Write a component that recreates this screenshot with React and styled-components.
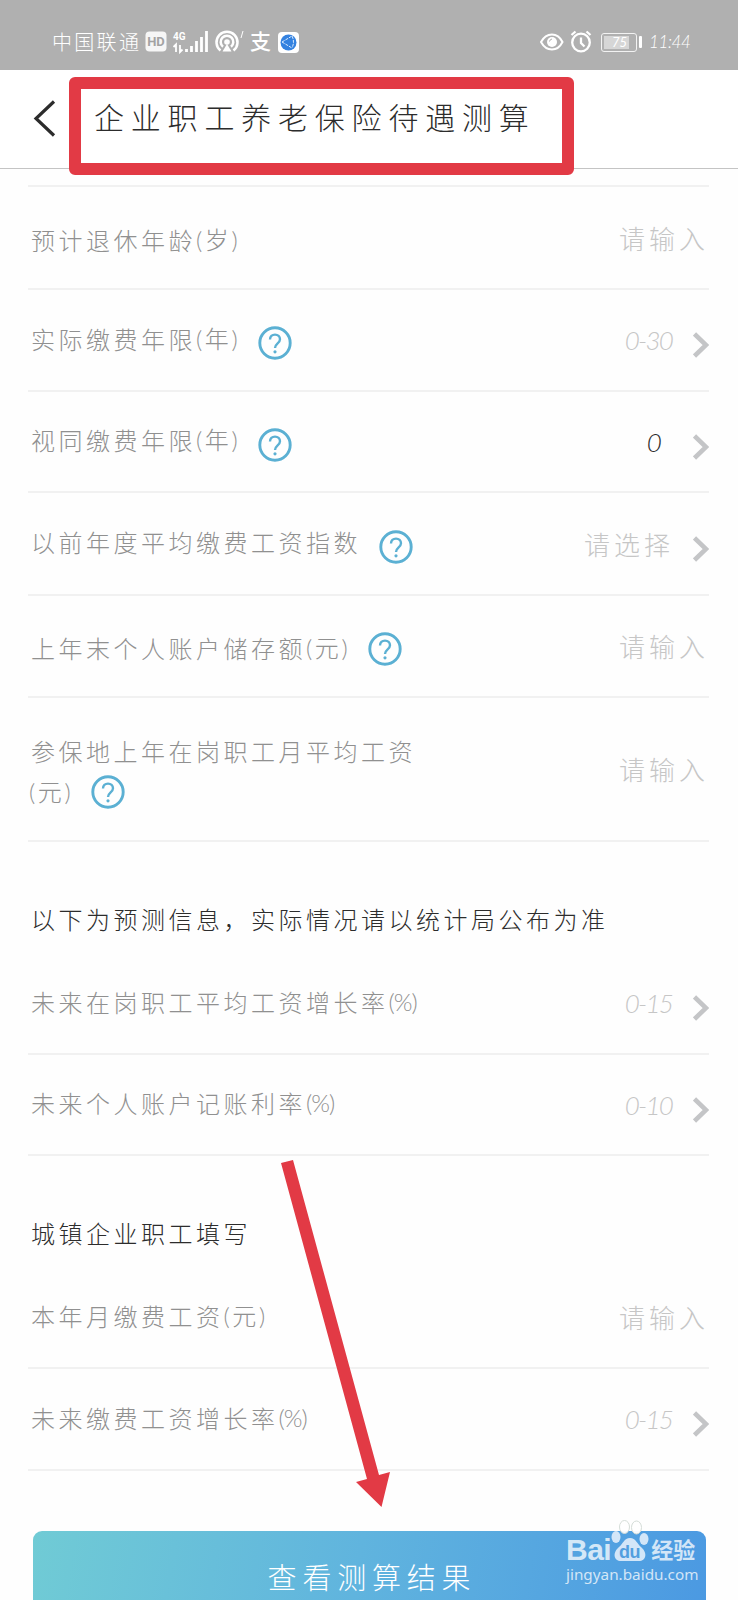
import React from 'react'
import styled, { createGlobalStyle } from 'styled-components'

const GlobalStyle = createGlobalStyle`
  * { box-sizing: border-box; }
  body {
    margin: 0;
    background: #fdfdfd;
    font-family: "Noto Sans CJK SC", "Noto Sans", sans-serif;
    font-weight: 300;
  }
`

const Screen = styled.div`
position: relative;
width: 738px;
height: 1600px;
overflow: hidden;
background: #fefefe;`

const StatusBar = styled.div`
display: flex;
align-items: center;
height: 70px;
padding: 14px 48px 0 52px;
background: #b0b0b0;
color: #fff;`

const Carrier = styled.span`
width: 93px;
font-size: 20px;
letter-spacing: 2.3px;
line-height: 28px;
white-space: nowrap;`

const StatusIcons = styled.svg`
display: block;
flex: none;`

const Pay = styled.span`
width: 22px;
height: 30px;
margin: 0 6px 0 5px;
font-size: 21px;
font-weight: 500;
line-height: 26px;`

const Spacer = styled.div`
flex: 1;`

const Battery = styled.div`
position: relative;
width: 36px;
height: 19px;
margin: 0 12px 0 9px;
padding: 2px;
border: 1.5px solid #f2f2f2;
border-radius: 3px;
&::after {
  content: '';
  position: absolute;
  right: -6px;
  top: 2px;
  width: 3px;
  height: 12px;
  border-radius: 1px;
  background: #fff;
}`

const Charge = styled.div`
width: 25px;
height: 100%;
padding-left: 8px;
background: #d6d6d6;
font: italic 13px/13px Lato, sans-serif;`

const Clock = styled.span`
width: 41px;
font: italic 300 17px/24px Lato, sans-serif;
letter-spacing: -0.4px;
white-space: nowrap;`

const Header = styled.header`
position: relative;
display: flex;
height: 99px;
padding-left: 33px;
border-bottom: 1px solid #c4c4c4;
background: #fff;`

const BackIcon = styled.svg`
display: block;
margin-top: 30px;`

const Title = styled.h1`
margin: 24px 0 0 37px;
color: #2c2c2c;
font-size: 30px;
font-weight: 300;
line-height: 44px;
letter-spacing: 6.8px;
white-space: nowrap;`

// Red marker frame drawn over the title
const Highlight = styled.div`
position: absolute;
left: 69px;
top: 7px;
width: 505px;
height: 98px;
border: 12px solid #e23a45;
border-radius: 6px;`

const Form = styled.main`
margin: 16px 29px 0 28px;
border-top: 2px solid #f1f1f1;`

const Row = styled.div`
display: flex;
align-items: center;
height: ${p => p.$height}px;
border-bottom: 2px solid #f1f1f1;`

const Label = styled.div`
display: flex;
flex-wrap: wrap;
align-items: center;
width: 420px;
padding: ${p => (p.$low ? '3px 0 0 3px' : '0 0 4px 3px')};
color: #909090;
font-size: 24px;
line-height: 41px;
letter-spacing: 3.5px;
white-space: nowrap;`

const LabelText = styled.span`
margin-right: ${p => (p.$wrap ? 40 : 0)}px;`

const Unit = styled.span`
margin-left: ${p => (p.$wrap ? -2 : 0)}px;
font-family: Lato, "Noto Sans CJK SC", sans-serif;
letter-spacing: ${p => (p.$tight ? -1 : 2.6)}px;`

const HelpIcon = styled.svg`
display: block;
position: relative;
top: ${p => (p.$low ? 1 : 5)}px;
margin-left: 18px;`

const Value = styled.div`
flex: 1;
padding-right: ${p => (p.$plain ? 0 : 34)}px;
margin-right: ${p => (p.$plain ? 0 : -15)}px;
color: ${p => (p.$filled ? '#2c2c2c' : '#c6c6c6')};
font-size: 26px;
line-height: 36px;
letter-spacing: 4px;
text-align: right;
white-space: nowrap;`

const NumberValue = styled(Value)`
padding-right: ${p => (p.$filled ? 48 : 36)}px;
font: italic 300 26px/36px Lato, sans-serif;
letter-spacing: -1.8px;`

const Chevron = styled.svg`
display: block;
position: relative;
top: 5px;`

const SectionTitle = styled.h2`
height: ${p => p.$height}px;
margin: 0;
padding: ${p => p.$top}px 0 0 3px;
color: #2c2c2c;
font-size: 24px;
font-weight: 300;
line-height: 36px;
letter-spacing: 3.5px;
white-space: nowrap;`

const Submit = styled.button`
display: block;
width: 673px;
height: 96px;
margin: 60px 0 0 32.5px;
padding: 0 0 5px 6px;
border: 0;
border-radius: 9px;
background: linear-gradient(100deg, #70cbd5 0%, #60b4de 48%, #4b99e2 100%);
color: #fff;
font: 300 29px/1 "Noto Sans CJK SC", sans-serif;
letter-spacing: 5.8px;
text-align: center;`

const Arrow = styled.svg`
position: absolute;
left: 270px;
top: 1150px;`

const Watermark = styled.div`
position: absolute;
left: 566px;
top: 1519px;
width: 140px;
color: rgba(255, 255, 255, 0.75);
white-space: nowrap;`

const Brand = styled.div`
display: flex;
align-items: flex-end;
height: 46px;
font: 700 30px/30px "Liberation Sans", sans-serif;
letter-spacing: -0.5px;`

const Paw = styled.svg`
display: block;
align-self: flex-start;`

const BrandCn = styled.span`
margin: 0 0 2px 2px;
font: 700 22px/30px "Noto Sans CJK SC", sans-serif;
letter-spacing: 0;`

const Site = styled.div`
font: 400 15.3px/19px "Noto Sans", sans-serif;`

const Help = ({ low }) => (
  <HelpIcon $low={low} width="34" height="34" viewBox="0 0 34 34" fill="none">
    <circle cx="17" cy="17" r="15.2" stroke="#5bb0d3" strokeWidth="2.9" />
    <path d="M12 13.6c0-3 2.1-5 5-5s5 2 5 4.7c0 2.1-1.2 3.2-2.6 4.4-1.5 1.3-2.4 2.2-2.4 4.4" stroke="#5bb0d3" strokeWidth="2.4" />
    <circle cx="17" cy="25.8" r="1.6" fill="#5bb0d3" />
  </HelpIcon>
)

const Next = () => (
  <Chevron width="16" height="26" viewBox="0 0 16 26" fill="none">
    <path d="M1.5 2L13 13 1.5 24" stroke="#c4c5c7" strokeWidth="4.6" />
  </Chevron>
)

const basics = [
  { label: '预计退休年龄', unit: '(岁)', low: true, value: '请输入', height: 103 },
  { label: '实际缴费年限', unit: '(年)', help: true, value: '0-30', number: true, next: true, height: 102 },
  { label: '视同缴费年限', unit: '(年)', help: true, value: '0', number: true, filled: true, next: true, height: 101 },
  { label: '以前年度平均缴费工资指数', help: true, value: '请选择', next: true, height: 103 },
  { label: '上年末个人账户储存额', unit: '(元)', low: true, help: true, value: '请输入', height: 102 },
  { label: '参保地上年在岗职工月平均工资', unit: '(元)', wrap: true, low: true, help: true, value: '请输入', height: 144 },
]

const forecast = [
  { label: '未来在岗职工平均工资增长率', unit: '(%)', value: '0-15', number: true, next: true, height: 102 },
  { label: '未来个人账户记账利率', unit: '(%)', value: '0-10', number: true, next: true, height: 101 },
]

const company = [
  { label: '本年月缴费工资', unit: '(元)', value: '请输入', height: 102 },
  { label: '未来缴费工资增长率', unit: '(%)', value: '0-15', number: true, next: true, height: 102 },
]

const Field = ({ label, unit, wrap, low, help, value, number, filled, next, height }) => {
  const ValueText = number ? NumberValue : Value
  return (
    <Row $height={height}>
      <Label $low={low}>
        <LabelText $wrap={wrap}>{label}</LabelText>
        {unit && <Unit $wrap={wrap} $tight={unit === '(%)'}>{unit}</Unit>}
        {help && <Help low={low} />}
      </Label>
      <ValueText $plain={!next} $filled={filled}>{value}</ValueText>
      {next && <Next />}
    </Row>
  )
}

const renderFields = fields => fields.map(f => <Field key={f.label} {...f} />)

export default function App() {
  return (
    <Screen>
      <GlobalStyle />
      <StatusBar>
        <Carrier>中国联通</Carrier>
        <StatusIcons width="100" height="24" viewBox="0 0 100 24" fill="none">
          <rect x="0.5" y="1.5" width="21" height="20" rx="4" fill="#f6f6f6" />
          <text x="11" y="16.2" fill="#a3a3a3" textAnchor="middle" fontFamily="Roboto" fontWeight="700" fontSize="13">HD</text>
          <text x="28" y="9.5" fill="#fff" fontFamily="Roboto" fontWeight="700" fontSize="10">4G</text>
          <path d="M28.5 17l2.5-2.5v7.5M35 15v7l2.5-2.500" stroke="#fff" strokeWidth="1.8" />
          <path d="M41.500 19v3M46.500 16v6M51.500 11v11M56.500 7v15M61.500 1v21" stroke="#fff" strokeWidth="2.8" />
          <path d="M75.500 20.500a10.500 10.500 0 1 1 13 0M78 16.800a6.300 6.300 0 1 1 8 0" stroke="#fff" strokeWidth="2.5" />
          <path d="M82 14l4.500 7.500h-9z" fill="#fff" />
          <circle cx="82" cy="12" r="2.8" fill="#fff" />
          <path d="M98 1l-2 7" stroke="#fff" />
        </StatusIcons>
        <Pay>支</Pay>
        <StatusIcons width="21" height="21" viewBox="0 0 21 21" fill="none">
          <rect width="21" height="21" rx="4" fill="#fff" />
          <circle cx="10.5" cy="10.5" r="8" fill="#3482e0" />
          <path d="M4 10L14 4M4 10l10 6M14 4c2 4 2 8 0 12" stroke="#d9ebff" strokeWidth="1" strokeDasharray="3 1" />
        </StatusIcons>
        <Spacer />
        <StatusIcons width="52" height="24" viewBox="0 0 52 24" fill="none">
          <path d="M1 12c5.500-10 16.500-10 21.500 0-5 10-16 10-21.500 0z" stroke="#fff" strokeWidth="2" />
          <circle cx="12" cy="12" r="5" fill="#fff" />
          <path d="M9.500 11.500a3 3 0 0 1 2.500-2.500" stroke="#b0b0b0" />
          <circle cx="41" cy="12.500" r="8.800" stroke="#fff" strokeWidth="2.3" />
          <path d="M41 7.500v5.500l3.500 3.500M31.500 5l4-3.500M50.500 5l-4-3.500" stroke="#fff" strokeWidth="2.3" />
        </StatusIcons>
        <Battery><Charge>75</Charge></Battery>
        <Clock>11:44</Clock>
      </StatusBar>
      <Header>
        <BackIcon width="24" height="37" viewBox="0 0 24 37" fill="none">
          <path d="M21 1.500L3 18.500 21 35.500" stroke="#2c2c2c" strokeWidth="3.2" />
        </BackIcon>
        <Title>企业职工养老保险待遇测算</Title>
        <Highlight />
      </Header>
      <Form>
        {renderFields(basics)}
        <SectionTitle $height={111} $top={59}>以下为预测信息，实际情况请以统计局公布为准</SectionTitle>
        {renderFields(forecast)}
        <SectionTitle $height={111} $top={59}>城镇企业职工填写</SectionTitle>
        {renderFields(company)}
      </Form>
      <Submit>查看测算结果</Submit>
      <Arrow width="130" height="360" viewBox="0 0 130 360">
        <path d="M11 13L23 10 109 325 120 322 111.500 357 86 332 97 329z" fill="#e23a45" />
      </Arrow>
      <Watermark>
        <Brand>
          Bai
          <Paw width="38" height="44" viewBox="0 0 38 44">
            <g fill="#fff" fillOpacity="0.95" stroke="#d5ddd8" strokeWidth="1">
              <ellipse cx="13.500" cy="8" rx="5" ry="6.500" />
              <ellipse cx="25.500" cy="8.500" rx="5" ry="6.500" />
            </g>
            <g fill="#d3e6f8">
              <ellipse cx="5" cy="18" rx="4.500" ry="6" />
              <ellipse cx="33" cy="20" rx="4.500" ry="6" />
              <path d="M19 19c-6 0-7 6-11 9-7 6-5 14 2 14h18c7 0 9-8 2-14-4-3-5-9-11-9z" />
            </g>
            <text x="18.500" y="39" fill="#529fdf" textAnchor="middle" fontFamily="Liberation Sans" fontWeight="700" fontSize="18">du</text>
          </Paw>
          <BrandCn>经验</BrandCn>
        </Brand>
        <Site>jingyan.baidu.com</Site>
      </Watermark>
    </Screen>
  )
}
